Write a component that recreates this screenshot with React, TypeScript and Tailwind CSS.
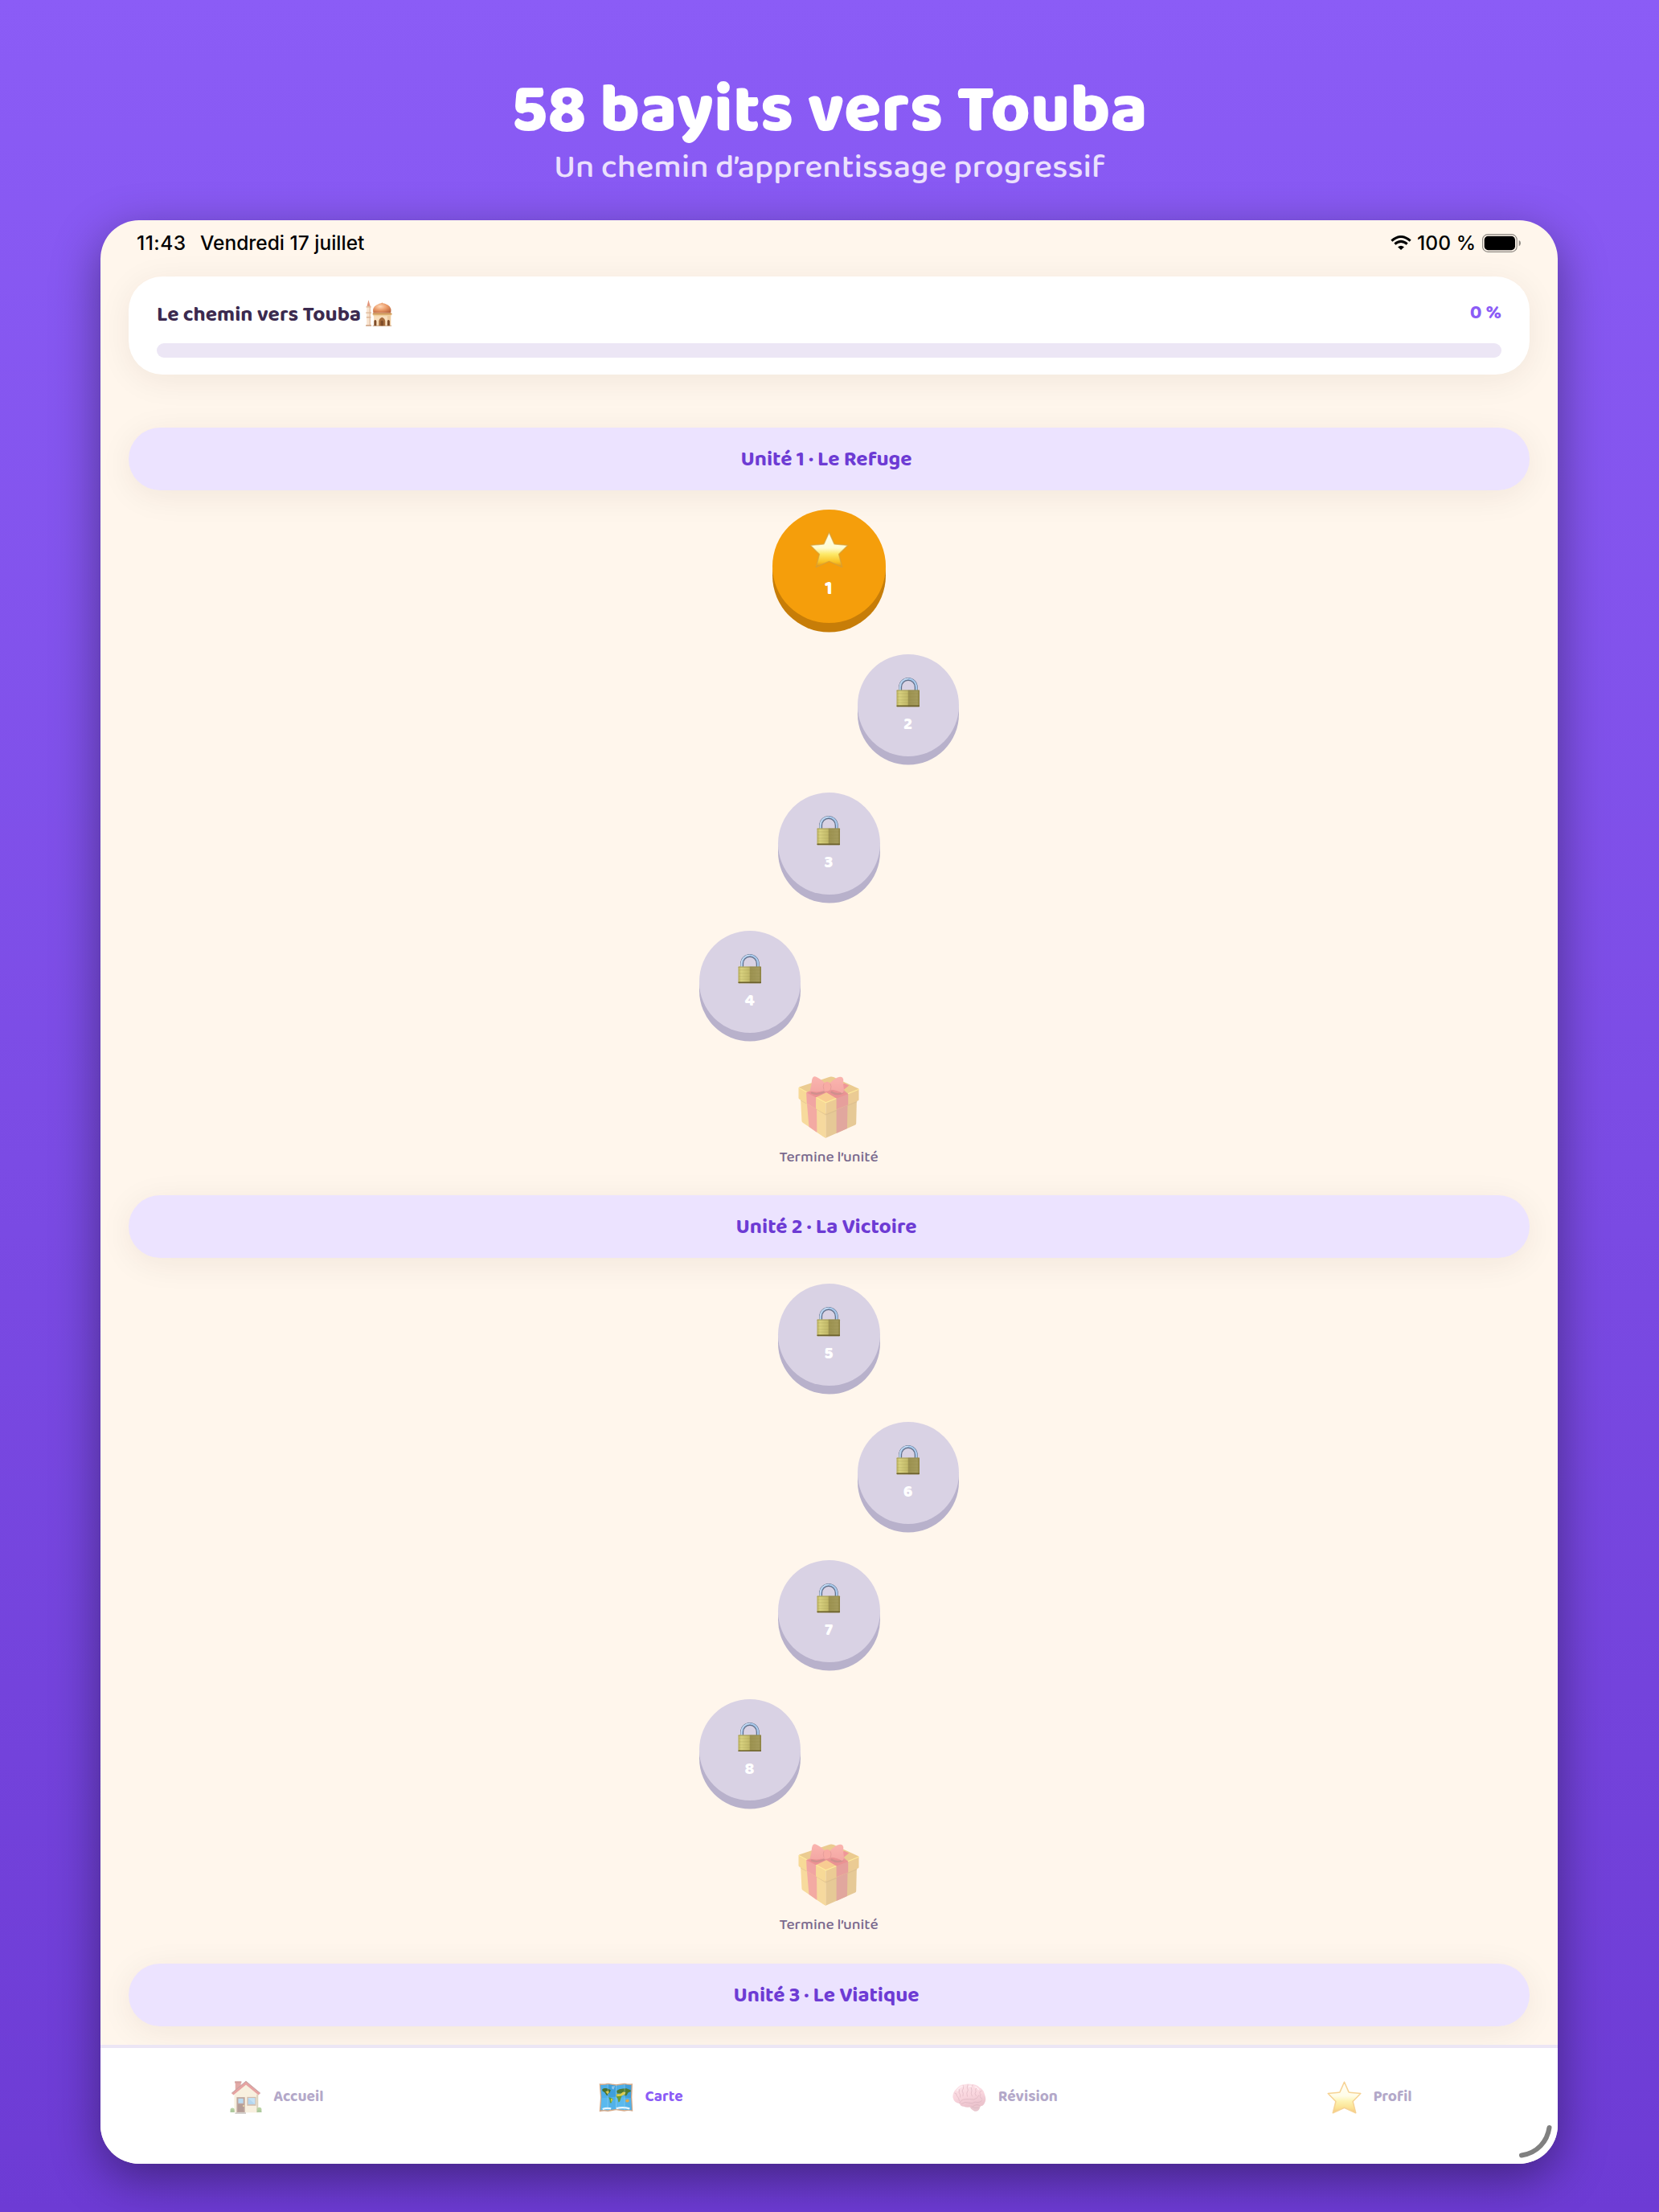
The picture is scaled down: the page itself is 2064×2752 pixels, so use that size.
import type { ReactNode } from 'react'

interface LevelNode {
  id: number
  shift: string
  current?: boolean
}

interface Unit {
  title: string
  nodes: LevelNode[]
}

const CENTER = ''
const RIGHT = 'ml-[197px]'
const LEFT = 'mr-[197px]'

const units: Unit[] = [
  {
    title: 'Unité 1 · Le Refuge',
    nodes: [
      { id: 1, shift: CENTER, current: true },
      { id: 2, shift: RIGHT },
      { id: 3, shift: CENTER },
      { id: 4, shift: LEFT },
    ],
  },
  {
    title: 'Unité 2 · La Victoire',
    nodes: [
      { id: 5, shift: CENTER },
      { id: 6, shift: RIGHT },
      { id: 7, shift: CENTER },
      { id: 8, shift: LEFT },
    ],
  },
  { title: 'Unité 3 · Le Viatique', nodes: [] },
]

function StarIcon({ className, pale }: { className: string; pale?: boolean }) {
  return (
    <svg viewBox="0 0 142 132" className={className} preserveAspectRatio="none">
      <defs>
        <linearGradient id="star" x1="0" y1="0" x2="0" y2="1">
          <stop offset="0" stopColor="#fffef2" />
          <stop offset="0.45" stopColor="#fffbd0" />
          <stop offset="0.62" stopColor="#fde96a" />
          <stop offset="0.85" stopColor="#f9c325" />
          <stop offset="1" stopColor="#e58c0c" />
        </linearGradient>
      </defs>
      <path
        d="M71 4 L89 44 Q90 46 93 46 L138 50 L106 82 L118 128 L71 107 L24 128 L36 82 L4 50 L49 46 Q52 46 53 44 Z"
        fill="url(#star)"
        stroke={pale ? '#efa82c' : '#d3a03c'}
        strokeWidth={pale ? 5 : 4}
        strokeOpacity={pale ? 1 : 0.7}
        strokeLinejoin="round"
      />
    </svg>
  )
}

function LockIcon() {
  return (
    <svg viewBox="0 0 88 110" className="mr-[1px] w-[29.5px] h-[36.5px]">
      <defs>
        <linearGradient id="lockBody" x1="0" y1="0" x2="1" y2="0">
          <stop offset="0" stopColor="#b5ab58" />
          <stop offset="0.12" stopColor="#d9d27f" />
          <stop offset="0.48" stopColor="#c2b969" />
          <stop offset="0.52" stopColor="#9c9250" />
          <stop offset="0.9" stopColor="#a59b5c" />
          <stop offset="1" stopColor="#8a7f3e" />
        </linearGradient>
      </defs>
      <path d="M15 50 V36 A29.5 30 0 0 1 74 36 V50" fill="none" stroke="#63718a" strokeWidth="12" />
      <path d="M14 50 V36 A30 31 0 0 1 75 36 V50" fill="none" stroke="#a9c9ec" strokeWidth="6.5" />
      <path d="M12 50 V36 A31 32 0 0 1 45 4" fill="none" stroke="#e4f0fa" strokeWidth="2" />
      <rect x="1" y="47" width="86" height="62" rx="2" fill="url(#lockBody)" />
      <path d="M3 60 H85 M3 72 H85 M3 84 H85 M3 94 H85" stroke="#8c8240" strokeOpacity="0.3" strokeWidth="2" />
      <rect x="1" y="104" width="86" height="5" rx="2" fill="#6b602c" />
      <path d="M2 48.5 H86" stroke="#8e8650" strokeWidth="2" />
    </svg>
  )
}

function GiftIcon() {
  return (
    <svg viewBox="0 0 228 232" className="mr-[2px] w-[76px] h-[77px] opacity-50">
      <defs>
        <linearGradient id="bow" x1="0" y1="0" x2="0" y2="1">
          <stop offset="0" stopColor="#f77673" />
          <stop offset="1" stopColor="#ea5a5e" />
        </linearGradient>
      </defs>
      {/* box */}
      <path d="M9 88 L103 138 V231 Q98 229 92 225 L17 174 Q13 171 13 167 Z" fill="#f0c050" />
      <path d="M103 138 L219 92 L217 176 Q217 181 212 183 L103 231 Z" fill="#cf9d42" />
      <path d="M69 130 L103 143 V231 L72 211 Z" fill="#efbd52" />
      <path d="M32 96 L69 118 L70 211 L40 189 Z" fill="#e8605c" />
      <path d="M143 122 L185 106 L183 196 L143 214 Z" fill="#c45a52" />
      <path d="M9 88 L32 101 M69 122 L103 143 L143 127 M185 108 L220 94" fill="none" stroke="#a9782a" strokeWidth="6" strokeOpacity="0.5" />
      {/* lid */}
      <path d="M3 41 L118 2 Q125 0 132 3 L225 46 Q228 48 224 51 L103 99 L3 45 Z" fill="#d9a236" />
      <path d="M1 42 L103 98 V142 L66 122 L30 101 L4 86 Q1 84 1 80 Z" fill="#f1bd45" />
      <path d="M103 98 L227 48 V87 Q227 90 223 92 L103 142 Z" fill="#d8a23e" />
      <path d="M65 80 L105 60 L145 80 L103 98 Z" fill="#f3a43b" />
      <path d="M2 43 L103 99 L227 49" fill="none" stroke="#ffe14f" strokeWidth="3.5" />
      <path d="M30 60 L112 24 L150 40 L66 79 V122 L32 102 Z" fill="#e5545a" />
      <path d="M31 61 L66 79 L110 58 L60 54 Z" fill="#d9303c" />
      <path d="M102 58 L150 32 L187 66 V107 L143 124 V82 Z" fill="#cf4a4e" />
      <path d="M102 58 L150 46 L187 66 L143 83 Z" fill="#d6303c" />
      <path d="M150 40 L172 26 L190 35 L165 55 Z" fill="#e23b48" />
      <path d="M48 61 Q70 72 98 58 M122 58 Q146 74 168 61" fill="none" stroke="#7d2c28" strokeWidth="7" strokeOpacity="0.6" />
      {/* bow */}
      <path d="M99 25 Q78 5 63 1 Q54 0 51 14 Q50 32 45 48 Q43 58 54 57 Q78 62 99 50 Z" fill="url(#bow)" />
      <path d="M119 25 Q138 5 156 2 Q167 1 169 12 Q167 30 171 49 Q172 58 165 64 Q145 52 119 50 Z" fill="url(#bow)" />
      <ellipse cx="108" cy="38" rx="15" ry="18" fill="#f2635f" />
      <path d="M96 28 Q91 38 96 50 M120 28 Q126 38 121 50" fill="none" stroke="#b8323a" strokeWidth="3" strokeOpacity="0.6" />
    </svg>
  )
}

function MosqueIcon() {
  return (
    <svg viewBox="0 0 102 100" className="w-[34px] h-[33px]">
      <defs>
        <radialGradient id="dome" cx="0.4" cy="0.35" r="0.75">
          <stop offset="0" stopColor="#ffd9b8" />
          <stop offset="0.5" stopColor="#ea9a68" />
          <stop offset="1" stopColor="#b8633c" />
        </radialGradient>
      </defs>
      <path d="M13 1 L7 24 H20 Z" fill="#e3957a" />
      <rect x="6" y="24" width="15" height="72" fill="#f9e4d0" />
      <rect x="16" y="24" width="5" height="72" fill="#e6c6ab" />
      <path d="M4 27 H23 M3 49 H24 M5 66 H22" stroke="#dcb596" strokeWidth="4" />
      <path d="M3 97 H24" stroke="#c99a79" strokeWidth="4" />
      <path d="M64 9 L67 15 H61 Z" fill="#eda477" />
      <path d="M31 50 Q26 30 43 20 Q54 13 64 12 Q75 13 86 20 Q102 30 97 50 Z" fill="url(#dome)" />
      <rect x="33" y="54" width="64" height="43" fill="#f9dfbd" />
      <rect x="84" y="58" width="13" height="39" fill="#edca9f" />
      <path d="M29 51 H101 V56 H29 Z" fill="#c98c3e" />
      <path d="M31 59 H98" stroke="#efcf9f" strokeWidth="4" />
      <path d="M52 98 V80 Q54 69 64 66 Q74 69 76 80 V98 Z" fill="#a56b3c" />
      <path d="M59 98 V82 Q64 74 69 82 V98 Z" fill="#7f4d29" />
      <path d="M34 98 V80 Q38 72 43 80 V98 Z M84 98 V80 Q88 72 93 80 V98 Z" fill="#7d4c2a" />
      <path d="M29 98 H100" stroke="#a87245" strokeWidth="2" />
    </svg>
  )
}

function HouseIcon() {
  return (
    <svg viewBox="0 0 120 124" className="w-[40px] h-[41px] opacity-50">
      <rect x="20" y="3" width="21" height="34" fill="#c95550" />
      <rect x="18" y="1" width="25" height="7" fill="#a8433f" />
      <path d="M16 50 L60 10 L106 50 V119 H16 Z" fill="#f3e3c0" />
      <path d="M100 50 L106 52 V118 H100 Z" fill="#b9a67f" />
      <path d="M60 1 L114 46 L107 53 L60 14 L13 53 L6 46 Z" fill="#cf4a48" />
      <path d="M60 1 L114 46 M60 1 L6 46" stroke="#7f4a48" strokeWidth="3" fill="none" />
      <rect x="25" y="61" width="31" height="57" fill="#80503f" />
      <rect x="31" y="66" width="19" height="18" fill="#78b6e2" />
      <rect x="30" y="88" width="21" height="27" fill="#6b3d31" />
      <circle cx="51" cy="94" r="3" fill="#e3ba4b" />
      <rect x="64" y="60" width="34" height="33" fill="#a77f60" />
      <rect x="68" y="64" width="26" height="24" fill="#6caee0" />
      <path d="M68 64 L94 88 V64 Z" fill="#8cc6ee" />
      <path d="M21 118 H60 V124 H18 Z" fill="#aaa29d" />
      <circle cx="9" cy="109" r="8" fill="#78a94b" />
      <path d="M1 118 Q0 108 9 107 Q18 108 17 118 Z" fill="#5f9440" />
      <circle cx="110" cy="108" r="9" fill="#78a94b" />
      <path d="M101 118 Q101 108 111 107 Q120 109 119 118 Z" fill="#5f9440" />
    </svg>
  )
}

function MapIcon() {
  return (
    <svg viewBox="0 0 130 112" className="w-[43px] h-[37px]">
      <path d="M2 4 Q18 6 34 2 L65 7 L97 2 Q112 6 127 4 L125 56 L128 108 Q110 104 96 108 L65 104 L34 109 Q20 105 2 110 L6 56 Z" fill="#d6a987" />
      <path d="M6 9 Q20 10 34 7 L65 11 L97 7 Q112 10 122 9 L121 56 L123 104 Q110 100 96 103 L65 99 L34 104 Q20 101 7 104 L10 56 Z" fill="#4eaee6" />
      <path d="M34 7 L65 11 V99 L34 104 Z M97 7 Q112 10 122 9 L121 56 L123 104 Q110 100 96 103 Z" fill="#2f8fcb" fillOpacity="0.45" />
      <path d="M10 58 L65 53 L121 58 L123 104 L96 103 L65 99 L34 104 L7 104 Z" fill="#66c4f6" fillOpacity="0.5" />
      {/* continents */}
      <path d="M13 25 Q20 19 31 22 L45 28 L41 38 L34 43 L35 50 L29 48 L22 37 L13 31 Z" fill="#456f2f" />
      <path d="M25 33 L36 31 L39 37 L32 43 Z" fill="#d7c13d" />
      <path d="M37 55 L44 57 L54 62 L50 69 L46 78 L42 76 L41 66 Z" fill="#5d9c36" />
      <path d="M45 60 L53 63 L47 74 Z" fill="#dfcb3e" />
      <path d="M48 14 L61 13 L56 26 L50 24 Z" fill="#8fc5e8" />
      <path d="M67 31 L77 25 L91 23 L104 22 L119 28 L121 33 L110 38 L105 48 L98 50 L94 44 L87 47 L81 41 L69 41 Z" fill="#4f7a32" />
      <path d="M66 43 L78 42 L87 49 L83 59 L79 71 L74 74 L71 60 L65 53 Z" fill="#6a9a35" />
      <path d="M67 43 L80 43 L92 35 L101 36 L98 44 L86 50 L68 52 Z" fill="#ddcd4f" />
      <path d="M101 65 L111 62 L115 70 L107 75 L101 72 Z" fill="#e3a845" />
      <path d="M14 100 Q30 94 46 98 M66 97 Q90 91 116 98" stroke="#e6f6ff" strokeWidth="7" fill="none" />
      <path d="M34 4 V106 M65 9 V101 M97 4 V105" stroke="#c5e7fa" strokeWidth="1.5" strokeOpacity="0.7" />
    </svg>
  )
}

function BrainIcon() {
  return (
    <svg viewBox="0 0 126 106" className="w-[42px] h-[35px] opacity-55">
      <defs>
        <linearGradient id="brain" x1="0" y1="0" x2="0.3" y2="1">
          <stop offset="0" stopColor="#fbd0d9" />
          <stop offset="0.6" stopColor="#f5b3c2" />
          <stop offset="1" stopColor="#dd94a6" />
        </linearGradient>
      </defs>
      <path d="M64 85 Q66 98 83 105 Q96 108 102 94 L106 82 Z" fill="#d79ba8" />
      <path d="M1 54 Q-1 34 15 20 Q27 4 46 4 Q58 -1 72 3 Q90 3 101 15 Q117 23 121 43 Q128 60 121 73 Q116 87 101 87 Q88 91 76 86 Q56 93 42 87 Q29 87 26 76 Q6 74 1 54 Z" fill="url(#brain)" />
      <g fill="none" stroke="#b97386" strokeWidth="2.5" strokeLinecap="round" strokeOpacity="0.75">
        <path d="M26 75 Q30 60 48 60 Q65 58 79 61 Q94 58 99 45" />
        <path d="M8 36 Q16 36 16 47 Q24 54 25 65" />
        <path d="M22 19 Q28 25 24 34 Q31 42 29 52" />
        <path d="M40 8 Q43 20 36 28 Q42 36 39 48" />
        <path d="M57 5 Q52 18 58 25 Q50 36 55 49" />
        <path d="M75 6 Q66 18 72 27 Q67 38 73 48" />
        <path d="M94 15 Q82 21 88 30 Q80 38 88 47" />
        <path d="M109 28 Q96 32 106 42 Q98 50 111 59" />
        <path d="M33 77 Q48 67 59 73 Q73 78 85 70 Q101 75 110 65" />
        <path d="M77 86 Q91 76 102 84 M71 88 Q82 95 97 92" />
      </g>
      <path d="M17 28 Q25 12 38 12 M60 12 Q67 8 72 12 M84 13 Q93 14 98 23" fill="none" stroke="#ffe4ea" strokeWidth="4" strokeLinecap="round" />
    </svg>
  )
}

function StatusBar() {
  return (
    <div className="flex h-[70px] items-start justify-between pl-[45px] pr-[46px] pt-[13px] font-[Inter,sans-serif] text-[24.5px] font-medium leading-[30px] text-black">
      <div className="flex">
        <span className="w-[79px] tracking-[0.5px]">11:43</span>
        <span>Vendredi 17 juillet</span>
      </div>
      <div className="flex">
        <svg viewBox="0 0 78 54" className="mt-[6px] mr-[7px] h-[18px] w-[26px]">
          <path d="M4 20 Q39 -11 74 20" fill="none" stroke="#000" strokeWidth="9" />
          <path d="M16 32 Q39 12 62 32" fill="none" stroke="#000" strokeWidth="9" />
          <path d="M39 54 L27 43 Q39 33 51 43 Z" fill="#000" />
        </svg>
        <span className="w-[81px] tracking-[0.1px]">100 %</span>
        <svg viewBox="0 0 144 68" className="mt-[4px] h-[23px] w-[48px]">
          <rect x="1.5" y="1.5" width="128" height="65" rx="20" fill="none" stroke="#8f8a84" strokeWidth="3.5" />
          <rect x="8" y="8" width="115" height="52" rx="14" fill="#000" />
          <path d="M137 23 Q144 27 144 34 Q144 41 137 45 Z" fill="#8f8a84" />
        </svg>
      </div>
    </div>
  )
}

function Level({ id, shift, current }: LevelNode) {
  return (
    <div className="flex h-[172.2px] items-center justify-center">
      {current ? (
        <div className={`mb-[11.5px] flex h-[141px] w-[141px] flex-col items-center rounded-full bg-[#f59e0b] pt-[27px] shadow-[0_11.5px_0_#c77d08] ${shift}`}>
          <StarIcon className="mr-[1px] h-[46px] w-[49px]" />
          <span className="mr-[1px] mt-[13.5px] text-[24px] font-extrabold leading-[24px] text-white">{id}</span>
        </div>
      ) : (
        <div className={`mb-[10.5px] flex h-[126.5px] w-[126.5px] flex-col items-center rounded-full bg-[#d9d2e4] pt-[29px] shadow-[0_10.5px_0_#b8b1cb] ${shift}`}>
          <LockIcon />
          <span className="mr-[1px] mt-[9.5px] text-[21px] font-extrabold leading-[24px] text-white">{id}</span>
        </div>
      )}
    </div>
  )
}

function Tab({ icon, label, active }: { icon: ReactNode; label: string; active?: boolean }) {
  return (
    <div className="flex items-center justify-center pr-[15px]">
      {icon}
      <span className={`ml-[14.5px] text-[19.3px] font-bold leading-[24px] ${active ? 'text-[#8b5cf6]' : 'text-[#b3a8c9]'}`}>
        {label}
      </span>
    </div>
  )
}

export default function App() {
  return (
    <div className="flex h-[2752px] w-[2064px] flex-col overflow-hidden bg-linear-to-b from-[#8b5cf6] to-[#6d3bd4] pt-[95px] font-['Baloo_2','Open_Sans',sans-serif]">
      <h1 className="text-center text-[84.8px] font-extrabold leading-[88px] text-white">
        58 bayits vers Touba
      </h1>
      <p className="text-center text-[41.8px] font-medium leading-[51px] text-[#ebe0fd]">
        Un chemin d’apprentissage progressif
      </p>

      <div className="relative ml-[125px] mt-[40px] flex h-[2418px] w-[1813px] flex-col overflow-hidden rounded-[48px] bg-[#fff6ec] shadow-[0_18px_60px_rgba(0,0,0,0.4)]">
        <StatusBar />

        <div className="flex h-[2200.3px] flex-col px-[35px]">
          <div className="h-[121.5px] shrink-0 rounded-[42px] bg-white px-[35px] pt-[28px] shadow-[0_7px_42px_rgba(60,30,20,0.07)]">
            <div className="flex h-[55px] justify-between">
              <div className="flex">
                <span className="mt-[3.5px] text-[26.35px] font-bold leading-[32px] text-[#3b2a4f]">
                  Le chemin vers Touba
                </span>
                <span className="ml-[5px] mt-px"><MosqueIcon /></span>
              </div>
              <span className="mt-[0.5px] text-[24.6px] font-bold leading-[32px] text-[#8b5cf6]">0 %</span>
            </div>
            <div className="h-[17.5px] rounded-full bg-[#ece6f5]" />
          </div>

          <div className="mt-[66.8px]">
            {units.map((unit) => (
              <div key={unit.title}>
                <div className="h-[78px] rounded-full bg-[#ece3ff] pr-[7px] text-center shadow-[0_7px_42px_rgba(60,30,20,0.07)]">
                  <span className="text-[26.35px] font-bold leading-[80px] text-[#6d3bd4]">
                    {unit.title}
                  </span>
                </div>
                {unit.nodes.length > 0 && (
                  <div className="h-[877.2px] pt-[14px]">
                    {unit.nodes.map((node) => (
                      <Level key={node.id} {...node} />
                    ))}
                    <div className="flex flex-col items-center pt-[25.5px]">
                      <GiftIcon />
                      <span className="mr-[1px] mt-[11px] text-[19.3px] font-medium leading-[26px] text-[#7a6a8e]">Termine l’unité</span>
                    </div>
                  </div>
                )}
              </div>
            ))}
          </div>
        </div>

        <div className="grid h-[147.7px] grid-cols-4 border-t-[4px] border-[#ece6f5] bg-white pb-[22px]">
          <Tab icon={<HouseIcon />} label="Accueil" />
          <Tab icon={<MapIcon />} label="Carte" active />
          <Tab icon={<BrainIcon />} label="Révision" />
          <Tab icon={<StarIcon className="h-[41px] w-[43px] opacity-50" pale />} label="Profil" />
        </div>

        {/* window resize handle */}
        <svg viewBox="0 0 44 44" className="absolute bottom-[6px] right-[6px] h-[44px] w-[44px]">
          <path d="M39.5 5 C37 22 25 36.5 5 39.5" fill="none" stroke="#808080" strokeWidth="6" strokeLinecap="round" />
        </svg>
      </div>
    </div>
  )
}
